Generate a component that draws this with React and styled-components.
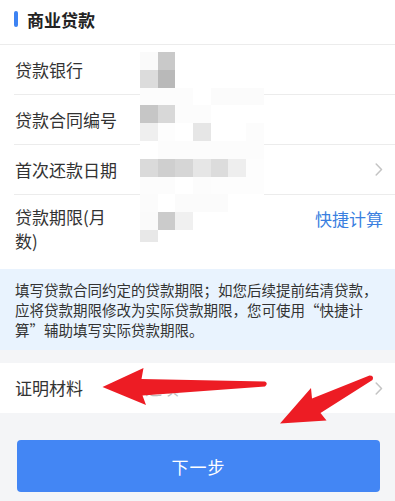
import React from "react";
import styled, { createGlobalStyle } from "styled-components";

const GlobalStyle = createGlobalStyle`
  html, body { margin: 0; padding: 0; background: #f4f5f7; }
  body { font-family: "Noto Sans CJK SC", "Noto Sans", sans-serif; -webkit-font-smoothing: antialiased; }
  * { box-sizing: border-box; }
`;

const Page = styled.div`
  position: relative;
  width: 395px;
  min-height: 501px;
  background: #f4f5f7;
  overflow: hidden;
`;

const Card = styled.section`
  position: relative;
  background: #ffffff;
`;

const Header = styled.div`
  height: 45px;
  display: flex;
  align-items: flex-start;
  padding: 11px 0 0 14px;
  border-bottom: 1px solid #ececec;
`;

const Bar = styled.span`
  width: 4px;
  height: 16px;
  border-radius: 2px;
  background: #3d83f3;
`;

const Title = styled.h2`
  margin: 0 0 0 9px;
  font-size: 17px;
  line-height: 18px;
  font-weight: 700;
  color: #222;
`;

const Row = styled.div`
  display: flex;
  align-items: ${(p) => (p.$top ? "flex-start" : "center")};
  min-height: ${(p) => (p.$top ? "auto" : "50px")};
  margin-left: ${(p) => (p.$flush ? "0" : "14px")};
  padding: ${(p) => (p.$top ? "10px 12px 16px 1px" : p.$flush ? "0 12px 0 15px" : "0 12px 0 1px")};
  border-bottom: ${(p) => (p.$divider ? "1px solid #ececec" : "none")};
  background: #fff;
`;

const Label = styled.div`
  width: 104px;
  flex: none;
  font-size: 17px;
  line-height: 24px;
  color: #333;
`;

const Value = styled.div`
  flex: 1;
  margin-left: 21px;
  font-size: 17px;
  line-height: 24px;
  color: #bdbdbd;
  padding-left: ${(p) => (p.$inset ? "5px" : "0")};
`;

const Action = styled.a`
  margin-top: 2px;
  font-size: 17px;
  line-height: 24px;
  color: #3a7fe0;
  text-decoration: none;
`;

const Info = styled.p`
  margin: 0;
  padding: 11px 15px 10px;
  background: #e9f3fe;
  font-size: 14.5px;
  line-height: 20px;
  color: #333;
`;

const Section = styled.section`
  margin-top: 13px;
`;

const Footer = styled.div`
  padding: 27px 15px 8px 17px;
`;

const Button = styled.button`
  width: 100%;
  height: 52px;
  border: none;
  border-radius: 4px;
  background: #4386f4;
  color: #fff;
  font-family: inherit;
  font-size: 17px;
  letter-spacing: 1px;
`;

const Mosaic = styled.div`
  position: absolute;
  left: 140px;
  top: 52px;
  display: grid;
  grid-template-columns: repeat(7, 17.7px);
  grid-template-rows: repeat(10, 17.8px) 12px;
`;

const Cell = styled.div`
  background: ${(p) => p.$c};
`;

const Overlay = styled.svg`
  position: absolute;
  left: 0;
  top: 0;
  width: 395px;
  height: 501px;
  pointer-events: none;
`;

const Chevron = () => (
  <svg width="8" height="13" viewBox="0 0 8 13" style={{ flex: "none" }}>
    <polyline points="1.2,1 6.5,6.5 1.2,12" fill="none" stroke="#c4c4c4" strokeWidth="1.5" strokeLinecap="round" strokeLinejoin="round" />
  </svg>
);

const mosaicData = [
  ["fa", "c9", "ff", "ff", "ff", "ff", "ff"],
  ["dc", "b9", "ff", "ff", "ff", "ff", "ff"],
  ["fc", "fc", "fc", "ff", "fb", "fb", "fb"],
  ["c6", "d8", "fc", "fc", "ff", "ff", "ff"],
  ["ef", "fd", "ff", "e6", "ff", "ff", "fc"],
  ["ff", "fc", "fc", "fc", "fc", "fc", "fc"],
  ["da", "cf", "d6", "e6", "dc", "ee", "fd"],
  ["fc", "fc", "ff", "fc", "fd", "fd", "fd"],
  ["fb", "ff", "fb", "fb", "fb", "ff", "ff"],
  ["fa", "cb", "f0", "ff", "ff", "ff", "ff"],
  ["e8", "ff", "ff", "ff", "ff", "ff", "ff"],
];

export default function App() {
  return (
    <>
      <GlobalStyle />
      <Page>
        <Card>
          <Header>
            <Bar />
            <Title>商业贷款</Title>
          </Header>
          <Row $divider>
            <Label>贷款银行</Label>
          </Row>
          <Row $divider>
            <Label>贷款合同编号</Label>
          </Row>
          <Row $divider>
            <Label>首次还款日期</Label>
            <Value />
            <Chevron />
          </Row>
          <Row $top>
            <Label>贷款期限(月数)</Label>
            <Value />
            <Action>快捷计算</Action>
          </Row>
          <Mosaic>
            {mosaicData.flatMap((r, i) =>
              r.map((c, j) => <Cell key={`${i}-${j}`} $c={`#${c}${c}${c}`} />)
            )}
          </Mosaic>
        </Card>
        <Info>
          填写贷款合同约定的贷款期限；如您后续提前结清贷款，应将贷款期限修改为实际贷款期限，您可使用“快捷计算”辅助填写实际贷款期限。
        </Info>
        <Section>
          <Row $flush>
            <Label>证明材料</Label>
            <Value $inset>选填</Value>
            <Chevron />
          </Row>
        </Section>
        <Footer>
          <Button>下一步</Button>
        </Footer>
        <Overlay viewBox="0 0 395 501">
          <path
            d="M102.5 387 L143.5 368 L141.5 379 L265 381.6 Q268.5 383.8 265 386.4 L142.5 395.5 L146 405 Z"
            fill="#ed1c24"
          />
          <path
            d="M280 423.5 L311 388 L312 398.5 L369.5 375.5 Q374.5 375.5 372.5 380 L320.5 413 L326.5 420.5 Z"
            fill="#ed1c24"
          />
        </Overlay>
      </Page>
    </>
  );
}
